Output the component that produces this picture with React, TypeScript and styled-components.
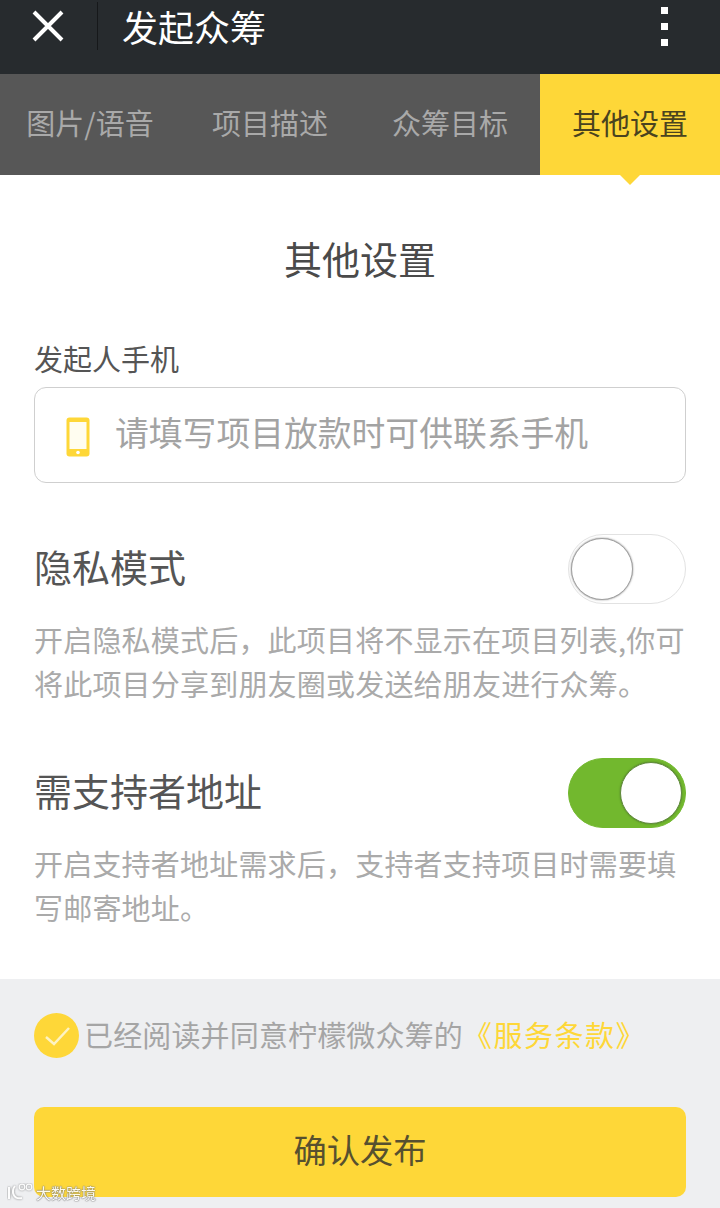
import React from 'react';
import styled, { createGlobalStyle } from 'styled-components';

const GlobalStyle = createGlobalStyle`
  html, body {
    margin: 0;
    padding: 0;
    background: #fff;
    font-family: "Noto Sans CJK SC", "Liberation Sans", sans-serif;
  }
  * { box-sizing: border-box; }
`;

const Page = styled.div`
  position: relative;
  width: 720px;
  height: 1208px;
  overflow: hidden;
  display: flex;
  flex-direction: column;
  background: #fff;
`;

const TopBar = styled.header`
  height: 74px;
  background: #272b2e;
  display: flex;
  align-items: flex-start;
  flex-shrink: 0;
`;

const CloseButton = styled.div`
  width: 70px;
  height: 50px;
  display: flex;
  align-items: center;
  justify-content: center;
  padding: 2px 0 0 25px;
`;

const BarDivider = styled.div`
  width: 1px;
  height: 48px;
  margin: 2px 0 0 27px;
  background: #16181a;
`;

const BarTitle = styled.h1`
  flex: 1;
  margin: 0 0 0 24px;
  font-size: 36px;
  font-weight: 400;
  line-height: 53px;
  color: #fff;
`;

const MoreButton = styled.div`
  width: 14px;
  margin: 7px 49px 0 0;
  display: flex;
  flex-direction: column;
  align-items: center;
  gap: 9px;
`;

const MoreDot = styled.span`
  width: 7px;
  height: 7px;
  background: #fff;
`;

const Tabs = styled.nav`
  height: 101px;
  background: #575757;
  display: flex;
  flex-shrink: 0;
`;

const Tab = styled.div<{ $active?: boolean }>`
  position: relative;
  width: 180px;
  display: flex;
  align-items: center;
  justify-content: center;
  padding-bottom: 5px;
  font-size: 29px;
  color: ${(p) => (p.$active ? '#4a431f' : '#a9a9a9')};
  background: ${(p) => (p.$active ? '#fed738' : 'transparent')};

  ${(p) =>
    p.$active &&
    `&::after {
      content: '';
      position: absolute;
      left: 80px;
      bottom: -10px;
      border-left: 10px solid transparent;
      border-right: 10px solid transparent;
      border-top: 10px solid #fed738;
    }`}
`;

const Form = styled.main`
  height: 804px;
  padding: 0 34px;
  flex-shrink: 0;
`;

const FormTitle = styled.h2`
  margin: 55px 0 0;
  height: 56px;
  font-size: 38px;
  line-height: 56px;
  font-weight: 400;
  text-align: center;
  color: #4a4a4a;
`;

const FieldLabel = styled.div`
  margin-top: 50px;
  height: 44px;
  font-size: 29px;
  line-height: 44px;
  color: #555;
`;

const InputBox = styled.div`
  margin-top: 7px;
  height: 96px;
  border: 1px solid #cfcfcf;
  border-radius: 12px;
  display: flex;
  align-items: center;
  padding-left: 31px;
  gap: 25px;
`;

const PhoneSlot = styled.span`
  display: flex;
  margin-top: 4px;
`;

const Placeholder = styled.span`
  font-size: 33.8px;
  line-height: 44px;
  padding-bottom: 6px;
  color: #a3a3a3;
  white-space: nowrap;
`;

const SwitchRow = styled.div<{ $top: number }>`
  margin-top: ${(p) => p.$top}px;
  height: 70px;
  display: flex;
  align-items: center;
  justify-content: space-between;
`;

const SwitchTitle = styled.div`
  font-size: 38px;
  line-height: 56px;
  padding-bottom: 7px;
  color: #555;
`;

const Switch = styled.div<{ $on?: boolean }>`
  width: 118px;
  height: 70px;
  border-radius: 35px;
  display: flex;
  align-items: center;
  justify-content: ${(p) => (p.$on ? 'flex-end' : 'flex-start')};
  padding: 0 ${(p) => (p.$on ? 3 : 2)}px;
  background: ${(p) => (p.$on ? '#72b82e' : '#fff')};
  border: 1px solid ${(p) => (p.$on ? '#72b82e' : '#e2e2e2')};
`;

const Knob = styled.div<{ $on?: boolean }>`
  width: 62px;
  height: 62px;
  border-radius: 50%;
  background: #fff;
  border: 1px solid ${(p) => (p.$on ? '#5f8a3a' : '#a0a0a0')};
  box-shadow: 0 0 2px ${(p) => (p.$on ? '#4f7a2a' : '#888')};
`;

const Description = styled.p`
  margin: 13px 0 0;
  font-size: 29px;
  line-height: 44px;
  color: #aaa;
  letter-spacing: 0.2px;
`;

const Footer = styled.footer`
  flex: 1;
  background: #eeeff1;
  padding: 33px 34px 0;
`;

const AgreeRow = styled.div`
  display: flex;
  align-items: center;
  height: 46px;
  gap: 5px;
`;

const AgreeText = styled.span`
  font-size: 29px;
  line-height: 44px;
  padding-bottom: 2px;
  letter-spacing: 0.15px;
  color: #a5a5a5;
  white-space: nowrap;
`;

const TermsLink = styled.span`
  color: #fed738;
  letter-spacing: 1.5px;
`;

const ConfirmButton = styled.div`
  margin-top: 49px;
  height: 90px;
  border-radius: 10px;
  background: #fed738;
  display: flex;
  align-items: center;
  justify-content: center;
  padding-bottom: 8px;
  font-size: 33.3px;
  color: #57502f;
`;

const Watermark = styled.div`
  position: absolute;
  left: 7px;
  bottom: 6px;
  display: flex;
  align-items: center;
  gap: 3px;
  font-size: 15px;
  line-height: 18px;
  color: #fff;
  opacity: 0.9;
  text-shadow: 0 0 1px #666, 0 0 1px #666, 0 0 2px #999;
`;

const CloseIcon = () => (
  <svg width="32" height="32" viewBox="0 0 32 32">
    <path d="M2 2 L30 30 M30 2 L2 30" stroke="#fff" strokeWidth="4" fill="none" />
  </svg>
);

const PhoneIcon = () => (
  <svg width="24" height="40" viewBox="0 0 24 40">
    <rect x="0.5" y="0.5" width="23" height="39" rx="3" fill="#fed738" />
    <rect x="3.5" y="5" width="17" height="27" fill="#fffdf0" />
    <circle cx="12" cy="35.5" r="1.8" fill="#fff" />
  </svg>
);

const CheckBadge = () => (
  <svg width="45" height="45" viewBox="0 0 45 45">
    <circle cx="22.5" cy="22.5" r="22.5" fill="#fed738" />
    <path d="M12 24 L20 31 L35 15" stroke="#fdf3c4" strokeWidth="2.5" fill="none" />
  </svg>
);

const WatermarkLogo = () => (
  <svg width="26" height="19" viewBox="0 0 26 19">
    <g fill="none" stroke="#fff" style={{ filter: 'drop-shadow(0 0 1px #777)' }}>
      <path d="M2 4 V16 M8 3 C4 8 6 17 15 15" strokeWidth="2" />
      <circle cx="15" cy="4" r="2.8" strokeWidth="1.2" />
      <circle cx="22" cy="4" r="2.8" strokeWidth="1.2" />
    </g>
  </svg>
);

const App: React.FC = () => {
  return (
    <Page>
      <GlobalStyle />
      <TopBar>
        <CloseButton>
          <CloseIcon />
        </CloseButton>
        <BarDivider />
        <BarTitle>发起众筹</BarTitle>
        <MoreButton>
          <MoreDot />
          <MoreDot />
          <MoreDot />
        </MoreButton>
      </TopBar>
      <Tabs>
        <Tab>图片/语音</Tab>
        <Tab>项目描述</Tab>
        <Tab>众筹目标</Tab>
        <Tab $active>其他设置</Tab>
      </Tabs>
      <Form>
        <FormTitle>其他设置</FormTitle>
        <FieldLabel>发起人手机</FieldLabel>
        <InputBox>
          <PhoneSlot>
            <PhoneIcon />
          </PhoneSlot>
          <Placeholder>请填写项目放款时可供联系手机</Placeholder>
        </InputBox>
        <SwitchRow $top={51}>
          <SwitchTitle>隐私模式</SwitchTitle>
          <Switch>
            <Knob />
          </Switch>
        </SwitchRow>
        <Description>
          开启隐私模式后，此项目将不显示在项目列表,你可
          <br />
          将此项目分享到朋友圈或发送给朋友进行众筹。
        </Description>
        <SwitchRow $top={53}>
          <SwitchTitle>需支持者地址</SwitchTitle>
          <Switch $on>
            <Knob $on />
          </Switch>
        </SwitchRow>
        <Description>
          开启支持者地址需求后，支持者支持项目时需要填
          <br />
          写邮寄地址。
        </Description>
      </Form>
      <Footer>
        <AgreeRow>
          <CheckBadge />
          <AgreeText>
            已经阅读并同意柠檬微众筹的<TermsLink>《服务条款》</TermsLink>
          </AgreeText>
        </AgreeRow>
        <ConfirmButton>确认发布</ConfirmButton>
      </Footer>
      <Watermark>
        <WatermarkLogo />
        <span>大数跨境</span>
      </Watermark>
    </Page>
  );
};

export default App;
